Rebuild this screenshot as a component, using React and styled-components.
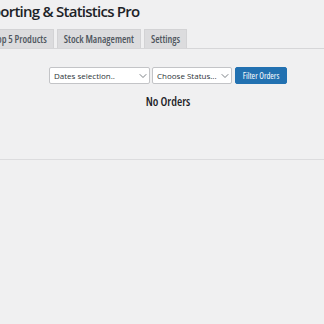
import React from 'react';
import styled, { createGlobalStyle } from 'styled-components';
import { ChevronDown } from 'lucide-react';

const GlobalStyle = createGlobalStyle`
  html, body {
    margin: 0;
    padding: 0;
    background-color: #f0f0f1;
    font-family: 'Open Sans', 'Noto Sans', sans-serif;
  }
`;

const Page = styled.div`
  width: 324px;
  height: 324px;
  overflow: hidden;
  background-color: #f0f0f1;
`;

// the admin page is scrolled a little to the right, so the heading and the
// first tab start off the left edge
const Wrap = styled.div`
  margin-left: -25px;
`;

const Title = styled.h1`
  margin: 0;
  padding-top: 1px;
  font-size: 15px;
  font-weight: 600;
  letter-spacing: -0.75px;
  line-height: 20px;
  color: #1d2327;
  white-space: nowrap;
`;

const TabBar = styled.nav`
  display: flex;
  gap: 3px;
  margin-top: 8px;
  padding-left: 11px;
  border-bottom: 1px solid #d6d6d8;
`;

const Tab = styled.a`
  box-sizing: border-box;
  height: 19px;
  padding: 3px 6px 0;
  border: 1px solid #d3d3d5;
  border-bottom: none;
  background-color: #dcdcde;
  color: #50575e;
  font-size: 10px;
  font-weight: 600;
  font-stretch: 75%;
  line-height: 13px;
  white-space: nowrap;
  text-decoration: none;
`;

const Panel = styled.section`
  padding: 18px 0 49px 12px;
  border-bottom: 1px solid #dcdcde;
`;

const FilterRow = styled.div`
  display: flex;
  justify-content: center;
  align-items: center;
  gap: 2px;
`;

const Select = styled.div`
  box-sizing: border-box;
  display: flex;
  align-items: center;
  justify-content: space-between;
  width: ${(p) => p.width}px;
  height: 17px;
  padding-left: 4px;
  border: 1px solid #c3c4c7;
  border-radius: 2px;
  background-color: #ffffff;
  color: #2c3338;
  font-size: 8px;
  white-space: nowrap;

  svg {
    flex: none;
    color: #50575e;
  }
`;

const FilterButton = styled.button`
  box-sizing: border-box;
  width: 52px;
  height: 17px;
  margin-left: 1px;
  padding: 0;
  border: 1px solid #2271b1;
  border-radius: 2px;
  background-color: #2271b1;
  color: #ffffff;
  font-family: inherit;
  font-size: 8.5px;
  font-stretch: 75%;
  white-space: nowrap;
`;

const Empty = styled.p`
  margin: 10px 0 0;
  text-align: center;
  font-size: 12px;
  font-weight: 600;
  font-stretch: 75%;
  line-height: 16px;
  color: #1d2327;
`;

const tabs = ['Top 5 Products', 'Stock Management', 'Settings'];

export default function App() {
  return (
    <Page>
      <GlobalStyle />
      <Wrap>
        <Title>Reporting &amp; Statistics Pro</Title>
        <TabBar>
          {tabs.map((t) => (
            <Tab key={t} href="#">{t}</Tab>
          ))}
        </TabBar>
      </Wrap>
      <Panel>
        <FilterRow>
          <Select width={101}>
            <span>Dates selection..</span>
            <ChevronDown size={12} strokeWidth={1.5} />
          </Select>
          <Select width={80}>
            <span>Choose Status...</span>
            <ChevronDown size={12} strokeWidth={1.5} />
          </Select>
          <FilterButton>Filter Orders</FilterButton>
        </FilterRow>
        <Empty>No Orders</Empty>
      </Panel>
    </Page>
  );
}
